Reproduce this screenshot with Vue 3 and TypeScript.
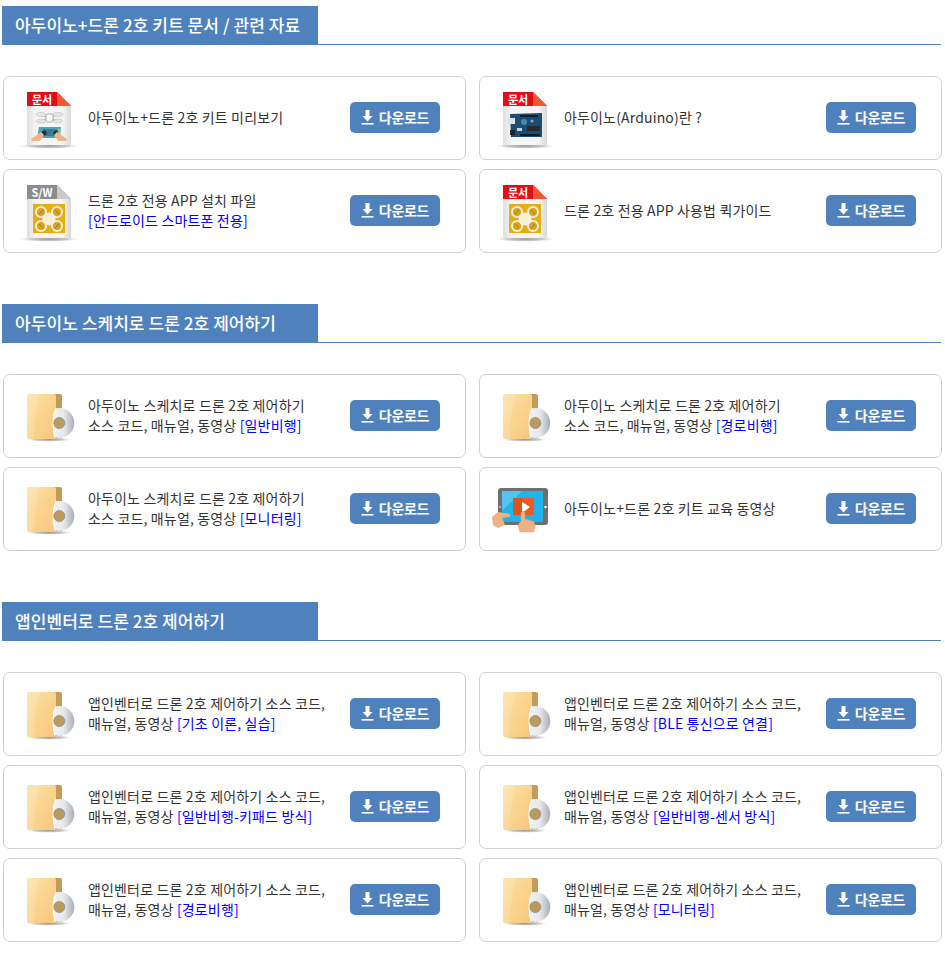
<script setup lang="ts">
type IconKind = 'docDrone' | 'docBoard' | 'swApp' | 'docApp' | 'folder' | 'video';

interface Item {
  icon: IconKind;
  first: string;
  second?: string;
  tag?: string;
}

interface Section {
  title: string;
  items: Item[];
}

const source = '소스 코드, 매뉴얼, 동영상 ';
const sketch = '아두이노 스케치로 드론 2호 제어하기';
const inventor = '앱인벤터로 드론 2호 제어하기 소스 코드,';
const manual = '매뉴얼, 동영상 ';

const sections: Section[] = [
  {
    title: '아두이노+드론 2호 키트 문서 / 관련 자료',
    items: [
      { icon: 'docDrone', first: '아두이노+드론 2호 키트 미리보기' },
      { icon: 'docBoard', first: '아두이노(Arduino)란 ?' },
      { icon: 'swApp', first: '드론 2호 전용 APP 설치 파일', tag: '[안드로이드 스마트폰 전용]' },
      { icon: 'docApp', first: '드론 2호 전용 APP 사용법 퀵가이드' },
    ],
  },
  {
    title: '아두이노 스케치로 드론 2호 제어하기',
    items: [
      { icon: 'folder', first: sketch, second: source, tag: '[일반비행]' },
      { icon: 'folder', first: sketch, second: source, tag: '[경로비행]' },
      { icon: 'folder', first: sketch, second: source, tag: '[모니터링]' },
      { icon: 'video', first: '아두이노+드론 2호 키트 교육 동영상' },
    ],
  },
  {
    title: '앱인벤터로 드론 2호 제어하기',
    items: [
      { icon: 'folder', first: inventor, second: manual, tag: '[기초 이론, 실습]' },
      { icon: 'folder', first: inventor, second: manual, tag: '[BLE 통신으로 연결]' },
      { icon: 'folder', first: inventor, second: manual, tag: '[일반비행-키패드 방식]' },
      { icon: 'folder', first: inventor, second: manual, tag: '[일반비행-센서 방식]' },
      { icon: 'folder', first: inventor, second: manual, tag: '[경로비행]' },
      { icon: 'folder', first: inventor, second: manual, tag: '[모니터링]' },
    ],
  },
];

const isDoc = (kind: IconKind) => kind !== 'folder' && kind !== 'video';
</script>

<template>
  <div class="page">
    <section v-for="section in sections" :key="section.title" class="section">
      <div class="heading">
        <h2>{{ section.title }}</h2>
      </div>
      <div class="grid">
        <div v-for="(item, i) in section.items" :key="i" class="card">
          <svg class="icon" width="64" height="64" viewBox="0 0 64 64">
            <defs>
              <linearGradient id="paper" x1="0" x2="1" y1="0" y2="0">
                <stop offset="0" stop-color="#dedede" />
                <stop offset="0.2" stop-color="#f5f5f5" />
                <stop offset="0.8" stop-color="#f5f5f5" />
                <stop offset="1" stop-color="#d8d8d8" />
              </linearGradient>
              <linearGradient id="manila" x1="0" x2="1" y1="0" y2="1">
                <stop offset="0" stop-color="#fde2a4" />
                <stop offset="1" stop-color="#f7c67a" />
              </linearGradient>
              <linearGradient id="disc" x1="0" x2="1" y1="0" y2="0">
                <stop offset="0" stop-color="#fafafa" />
                <stop offset="0.65" stop-color="#e6e8ec" />
                <stop offset="1" stop-color="#a9aeb6" />
              </linearGradient>
              <radialGradient id="floor">
                <stop offset="0" stop-color="#999999" />
                <stop offset="0.6" stop-color="#cccccc" />
                <stop offset="1" stop-color="#ffffff" stop-opacity="0" />
              </radialGradient>
            </defs>

            <template v-if="isDoc(item.icon)">
              <ellipse cx="33" cy="60" rx="32" ry="3" fill="url(#floor)" />
              <path d="M11 20 H55 V59 H11 Z" fill="url(#paper)" />
              <path d="M11 6 H41 L55 20 H11 Z" :fill="item.icon === 'swApp' ? '#8c8c8c' : '#e30d18'" />
              <path d="M41 6 L55 20 H41 Z" :fill="item.icon === 'swApp' ? '#c9c9c9' : '#ee5a30'" />
              <text class="band-text" x="26" y="17.5" text-anchor="middle">{{ item.icon === 'swApp' ? 'S/W' : '문서' }}</text>
            </template>

            <g v-if="item.icon === 'docDrone'">
              <path d="M25 29 L41 35 M41 29 L25 35" stroke="#c4c4c4" stroke-width="1.5" />
              <g fill="#e6e6e6" stroke="#bdbdbd" stroke-width="0.6">
                <ellipse cx="25" cy="28.5" rx="5" ry="2" />
                <ellipse cx="42" cy="28.5" rx="5" ry="2" />
                <ellipse cx="25" cy="35" rx="4.5" ry="2" />
                <ellipse cx="42" cy="35" rx="4.5" ry="2" />
              </g>
              <rect x="30" y="28" width="7" height="8" rx="2" fill="#fafafa" stroke="#8f8f8f" stroke-width="0.7" />
              <path d="M23 41 H45 L44 52 H21 Z" fill="#4ea3bc" />
              <rect x="27" y="43" width="14" height="7" fill="#3b7a94" />
              <circle cx="28" cy="47" r="2.5" fill="#2b2b2b" />
              <circle cx="40" cy="47" r="2.5" fill="#2b2b2b" />
              <rect x="42" y="42.5" width="2" height="7" fill="#7fc48a" />
              <path d="M15 53 L25 46 L28 49 L24 55 H16 Z" fill="#efb48e" />
              <path d="M51 53 L41 46 L38 49 L42 55 H50 Z" fill="#efb48e" />
            </g>

            <g v-if="item.icon === 'docBoard'">
              <path d="M18 28 L50 27 V51 H19 Z" fill="#1b4c73" />
              <rect x="16" y="32" width="7" height="6" fill="#dfe3e6" />
              <rect x="18" y="44" width="5" height="5" fill="#222" />
              <rect x="28" y="29" width="18" height="2" fill="#111c24" />
              <rect x="28" y="48" width="20" height="2" fill="#111c24" />
              <rect x="35" y="40" width="13" height="5" fill="#2a2a2a" />
              <circle cx="32" cy="36" r="3" fill="#4a87ad" />
              <circle cx="40" cy="35" r="1.6" fill="#88a9c0" />
              <rect x="25" y="42" width="5" height="3" fill="#c9d0d6" />
            </g>

            <g v-if="item.icon === 'swApp' || item.icon === 'docApp'">
              <rect x="17" y="25" width="32" height="29" fill="#e7ae14" />
              <g fill="#d9a31a" stroke="#f5efdb" stroke-width="2">
                <circle cx="25" cy="33" r="5" />
                <circle cx="41" cy="33" r="5" />
                <circle cx="25" cy="47" r="5" />
                <circle cx="41" cy="47" r="5" />
              </g>
              <g stroke="#8a7a4a" stroke-width="1">
                <path d="M23 35 L27 31" />
                <path d="M39 31 L43 35" />
                <path d="M23 45 L27 49" />
                <path d="M39 49 L43 45" />
              </g>
              <circle cx="33" cy="40" r="6.5" fill="#f5efdb" />
            </g>

            <g v-if="item.icon === 'folder'">
              <ellipse cx="33" cy="55.5" rx="24" ry="2.5" fill="url(#floor)" />
              <path d="M36 10 H44 Q46 10 46 12 V54 H36 Z" fill="#c49c5a" />
              <circle cx="43.3" cy="39" r="15" fill="url(#disc)" />
              <path d="M13 10 H38 Q40 10 40 12 V24 Q37 30 37 39 Q37 47 39 54 V55 H13 Q11 55 11 53 V12 Q11 10 13 10 Z" fill="url(#manila)" />
              <path d="M40 24 Q37 30 37 39 Q37 47 39 54" fill="none" stroke="#fff" stroke-width="1" />
              <path d="M13 10 H24 Q18 30 18 55 H13 Q11 55 11 53 V12 Q11 10 13 10 Z" fill="#fff" opacity="0.14" />
              <circle cx="43.3" cy="39" r="5.5" fill="#bb9a5e" stroke="#8f8f8f" stroke-width="0.8" />
            </g>

            <g v-if="item.icon === 'video'">
              <rect x="6" y="11" width="50" height="37" rx="3" fill="#6d6f72" />
              <rect x="10" y="14" width="41" height="31" fill="#20b4ea" />
              <path d="M10 14 H30 L10 34 Z" fill="#52c4ee" />
              <circle cx="8" cy="30" r="0.9" fill="#c9cbcd" />
              <circle cx="53.5" cy="30" r="1.2" fill="#fff" />
              <rect x="21" y="21" width="21" height="17" rx="1.5" fill="#ee5a24" />
              <path d="M21 21 H31 V38 H21 Z" fill="#d9541f" />
              <path d="M30 25 L38 30 L30 36 Z" fill="#fff" />
              <path d="M0 40 L6 35 L18 37 Q18.5 40 17 40 L10 41 L13 48 L6 51 L1 48 Z" fill="#eeb184" />
              <path d="M29 44 V35.5 Q31 33 33 35.5 V42 L41 44 Q43.5 46 43 50 L41.5 55 H28 L26 48 Z" fill="#eeb184" stroke="#d9936a" stroke-width="0.4" />
            </g>
          </svg>

          <p class="label">
            {{ item.first }}
            <template v-if="item.second"><br />{{ item.second }}</template>
            <template v-else-if="item.tag"><br /></template>
            <span v-if="item.tag" class="tag">{{ item.tag }}</span>
          </p>

          <button class="download" type="button">
            <svg width="13" height="16" viewBox="0 0 13 16">
              <path d="M4.5 1 H8.5 V7 H11.5 L6.5 12.5 L1.5 7 H4.5 Z" fill="#fff" />
              <rect x="0.5" y="14" width="12" height="1.6" fill="#fff" />
            </svg>
            다운로드
          </button>
        </div>
      </div>
    </section>
  </div>
</template>

<style>
body {
  background: #fff;
}
</style>

<style scoped>
.page {
  box-sizing: border-box;
  width: 945px;
  padding: 6px 0 21px 2px;
  font-family: "Noto Sans CJK KR", "Noto Sans", sans-serif;
  display: flex;
  flex-direction: column;
  gap: 51px;
}

.heading {
  width: 939px;
  height: 39px;
  border-bottom: 1px solid #4f81bd;
  box-sizing: border-box;
}

.heading h2 {
  box-sizing: border-box;
  width: 316px;
  height: 39px;
  margin: 0;
  padding-left: 13px;
  background: #4f81bd;
  color: #fff;
  font-size: 17px;
  font-weight: 500;
  line-height: 38px;
  letter-spacing: 0.07px;
}

.grid {
  display: grid;
  grid-template-columns: 463px 463px;
  column-gap: 13px;
  row-gap: 9px;
  margin: 31px 0 0 1px;
}

.card {
  box-sizing: border-box;
  height: 84px;
  border: 1px solid #cfcfcf;
  border-radius: 7px;
  display: flex;
  align-items: center;
  padding: 0 25px 1px 12px;
}

.icon {
  flex: none;
  margin-top: 1px;
}

.band-text {
  fill: #fff;
  font-size: 11px;
  font-weight: 700;
}

.label {
  flex: 1;
  margin: 0 0 2px 8px;
  color: #333;
  font-size: 14px;
  line-height: 20px;
  letter-spacing: 0.16px;
  white-space: nowrap;
}

.tag {
  color: #0000ff;
}

.download {
  flex: none;
  display: flex;
  align-items: center;
  justify-content: center;
  gap: 5px;
  width: 90px;
  height: 31px;
  padding: 0 0 2px;
  border: 0;
  border-radius: 5px;
  background: #4f81bd;
  color: #fff;
  font-family: inherit;
  font-size: 14px;
  font-weight: 700;
  letter-spacing: -0.3px;
}
</style>
